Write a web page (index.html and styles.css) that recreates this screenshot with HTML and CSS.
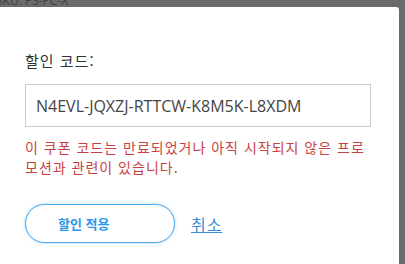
FILE: index.html
```html
<!DOCTYPE html>
<html lang="ko">
  <head>
    <meta charset="UTF-8" />
    <meta name="viewport" content="width=device-width, initial-scale=1.0" />
    <title>할인 코드</title>
    <link rel="stylesheet" href="styles.css">
  </head>
  <body>
    <!-- Page behind the overlay -->
    <div class="page-peek">
      <span>SKU: PS-PC-X</span>
    </div>

    <!-- Discount dialog -->
    <div class="modal">
      <label class="field-label" for="code-input">할인 코드:</label>
      <input class="code-input" id="code-input" type="text" value="N4EVL-JQXZJ-RTTCW-K8M5K-L8XDM" />
      <p class="error-text">이 쿠폰 코드는 만료되었거나 아직 시작되지 않은 프로모션과 관련이 있습니다.</p>
      <div class="actions">
        <button class="apply-button">할인 적용</button>
        <a class="cancel-link" href="#">취소</a>
      </div>
    </div>
  </body>
</html>
```

FILE: styles.css
```css
/* Global Styles */
body {
  margin: 0;
  padding: 0;
  height: 264px;
  overflow: hidden;
  background-color: #6b6b6b; /* Overlay grey */
  font-family: "Open Sans", "Noto Sans CJK KR", sans-serif;
  display: flex;
  flex-direction: column;
}

/* Page text peeking above the dialog */
.page-peek {
  height: 7px;
  overflow: hidden;
}

.page-peek span {
  display: block;
  margin-top: -6px;
  margin-left: -4px;
  font-size: 12px;
  line-height: 14px;
  color: #3f3f3f;
}

/* Dialog */
.modal {
  flex: 1;
  margin-right: 6px;
  background-color: #ffffff;
  border-radius: 0 3px 0 0;
  padding: 44px 28px 0 25px;
}

.field-label {
  display: block;
  font-family: "Noto Sans CJK KR", sans-serif;
  font-size: 15px;
  line-height: 20px;
  letter-spacing: 1px;
  color: #333333;
}

.code-input {
  display: block;
  width: 100%;
  height: 43px;
  margin-top: 13px;
  box-sizing: border-box;
  border: 1px solid #cccccc;
  padding: 0 10px;
  font-family: "Open Sans", sans-serif;
  font-size: 16px;
  color: #444444;
  outline: none;
}

.error-text {
  margin: 10px 0 0;
  font-family: "Noto Sans CJK KR", sans-serif;
  font-size: 14px;
  line-height: 20px;
  letter-spacing: 1px;
  color: #c7423f; /* Error red */
}

/* Buttons */
.actions {
  display: flex;
  align-items: center;
  margin-top: 27px;
}

.apply-button {
  width: 150px;
  height: 39px;
  padding: 0 0 0 32px;
  text-align: left;
  background-color: #ffffff;
  border: 1px solid #4aa8ee;
  border-radius: 20px;
  box-shadow: 0 0 3px rgba(74, 168, 238, 0.5);
  font-family: "Noto Sans CJK KR", sans-serif;
  font-size: 13px;
  font-weight: 700;
  color: #2a95ec;
  cursor: pointer;
}

.cancel-link {
  margin-left: 16px;
  font-family: "Noto Sans CJK KR", sans-serif;
  font-size: 16px;
  letter-spacing: 1px;
  color: #3b8fd9;
  text-decoration: underline;
}
```
